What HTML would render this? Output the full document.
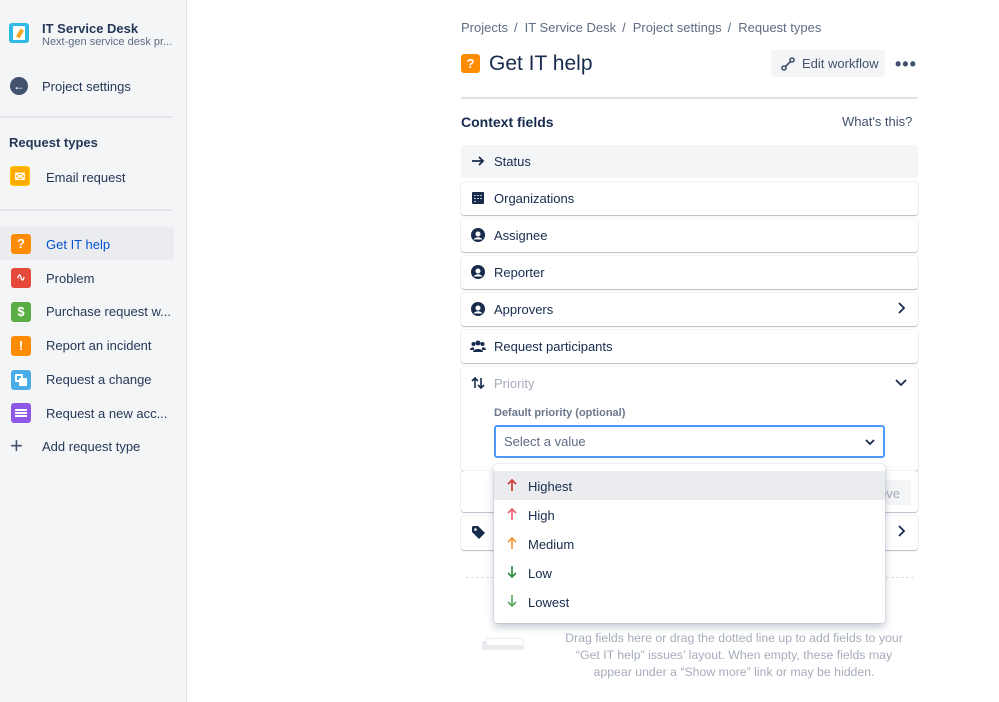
<!DOCTYPE html><html><head><meta charset="utf-8"><style>
*{box-sizing:border-box;margin:0;padding:0}
body{width:999px;height:702px;overflow:hidden;background:#fff;font-family:"Liberation Sans",sans-serif;color:#172b4d;position:relative;font-size:13px}
.sb{position:absolute;left:0;top:0;width:187px;height:702px;background:#f4f5f7;border-right:1px solid #dfe1e6}
.a{position:absolute}
.ico{position:absolute;width:20px;height:20px;border-radius:3px;color:#fff;font-weight:bold;font-size:13px;text-align:center;line-height:20px}
.nav{position:absolute;left:46px;font-size:13px;color:#253858}
.hr{position:absolute;left:0;width:173px;height:2px;background:#e4e6ea}
.row{position:absolute;left:461px;width:457px;height:33px;border-radius:3px;box-shadow:0 1px 1px rgba(9,30,66,.25),0 0 1px rgba(9,30,66,.31);background:#fff}
.row span{position:absolute;left:33px;top:9px;font-size:13px;color:#172b4d}
.row svg{position:absolute;left:9px;top:8px}
.chev{position:absolute;right:10px;top:9px}
.dd{position:absolute;left:494px;top:464px;width:391px;height:159px;background:#fff;border-radius:3px;box-shadow:0 4px 8px rgba(9,30,66,.25),0 0 1px rgba(9,30,66,.31)}
.opt{position:absolute;left:0;width:391px;height:29px}
.opt span{position:absolute;left:34px;top:8px;font-size:13px}
.opt svg{position:absolute;left:12px;top:7px}
.bc span{margin:0 7px 0 6px}
</style></head><body>
<div class="sb">
<div class="a" style="left:9px;top:23px;width:20px;height:20px;background:#2fb9e6;border-radius:3px"><div style="position:absolute;left:4px;top:3px;width:12px;height:14px;background:#fff;border-radius:1px"></div><div style="position:absolute;left:9px;top:6px;width:4px;height:9px;background:#f5a623;transform:rotate(30deg)"></div></div>
<div class="a" style="left:42px;top:21px;font-size:13px;font-weight:bold;color:#253858">IT Service Desk</div>
<div class="a" style="left:42px;top:36px;font-size:11px;color:#5e6c84">Next-gen service desk pr...</div>
<div class="a" style="left:10px;top:77px;width:18px;height:18px;border-radius:50%;background:#42526e;color:#fff;font-size:12px;line-height:18px;text-align:center;font-weight:bold">&#8592;</div>
<div class="a" style="left:42px;top:79px;color:#253858">Project settings</div>
<div class="hr" style="top:116px"></div>
<div class="a" style="left:9px;top:135px;font-weight:bold;color:#253858">Request types</div>
<div class="ico" style="left:10px;top:166px;background:#ffab00;border:1px solid #ffc400">&#9993;</div>
<div class="nav" style="top:170px">Email request</div>
<div class="hr" style="top:209px"></div>
<div class="a" style="left:0;top:227px;width:174px;height:33px;background:#ebecf0;border-radius:0 3px 3px 0"></div>
<div class="ico" style="left:11px;top:234px;background:#ff8b00">?</div>
<div class="nav" style="top:237px;color:#0052cc">Get IT help</div>
<div class="ico" style="left:11px;top:268px;background:#e5493a;font-size:11px">&#8767;</div>
<div class="nav" style="top:271px">Problem</div>
<div class="ico" style="left:11px;top:302px;background:#5aac44">$</div>
<div class="nav" style="top:304px">Purchase request w...</div>
<div class="ico" style="left:11px;top:336px;background:#ff8b00">!</div>
<div class="nav" style="top:338px">Report an incident</div>
<div class="ico" style="left:11px;top:370px;background:#4bade8"><div style="position:absolute;left:4px;top:4px;width:8px;height:8px;border:2px solid #fff;border-radius:1px"></div><div style="position:absolute;left:8px;top:8px;width:8px;height:8px;background:#fff;border-radius:1px"></div></div>
<div class="nav" style="top:372px">Request a change</div>
<div class="ico" style="left:11px;top:403px;background:#8f57e6"><div style="position:absolute;left:4px;top:6px;width:12px;height:2px;background:#fff;box-shadow:0 3px 0 #fff,0 6px 0 #fff"></div></div>
<div class="nav" style="top:406px">Request a new acc...</div>
<div class="a" style="left:10px;top:437px;font-size:22px;line-height:18px;color:#42526e">+</div>
<div class="nav" style="left:42px;top:439px">Add request type</div>
</div>

<div class="a bc" style="left:461px;top:20px;color:#5e6c84;font-size:13px;white-space:nowrap">Projects<span>/</span>IT Service Desk<span>/</span>Project settings<span>/</span>Request types</div>
<div class="ico" style="left:461px;top:54px;background:#ff8b00;width:19px;height:19px;line-height:19px">?</div>
<div class="a" style="left:489px;top:52px;font-size:21px;color:#172b4d">Get IT help</div>
<div class="a" style="left:771px;top:50px;width:114px;height:27px;background:#f4f5f7;border-radius:3px"><svg class="a" style="left:9px;top:6px" width="16" height="16" viewBox="0 0 16 16" fill="none" stroke="#42526e" stroke-width="1.6"><circle cx="4" cy="12" r="2"/><circle cx="12" cy="4" r="2"/><path d="M5.5 10.5 10.5 5.5"/></svg><span class="a" style="left:31px;top:6px;color:#42526e">Edit workflow</span></div>
<div class="a" style="left:895px;top:54px;font-size:18px;color:#42526e;letter-spacing:1px;font-weight:bold">&#8226;&#8226;&#8226;</div>
<div class="a" style="left:461px;top:97px;width:457px;height:2px;background:#dfe1e6"></div>
<div class="a" style="left:461px;top:114px;font-size:14px;font-weight:bold">Context fields</div>
<div class="a" style="left:842px;top:114px;color:#42526e">What's this?</div>

<div class="row" style="top:145px;background:#f4f5f7;box-shadow:none"><svg width="16" height="16" viewBox="0 0 16 16" fill="none" stroke="#172b4d" stroke-width="1.8"><path d="M2 8h11M9 4l4 4-4 4"/></svg><span>Status</span></div>
<div class="row" style="top:182px"><svg width="16" height="16" viewBox="0 0 16 16"><rect x="2" y="2" width="12" height="12" rx="1" fill="#172b4d"/><path d="M5 5v1M5 8v1M5 11v1M8 5v1M8 8v1M11 5v1M11 8v1" stroke="#fff" stroke-width="1.4"/></svg><span>Organizations</span></div>
<div class="row" style="top:219px"><svg width="16" height="16" viewBox="0 0 16 16"><circle cx="8" cy="8" r="7" fill="#172b4d"/><circle cx="8" cy="7" r="2.5" fill="#fff"/><path d="M3.5 12.5c2-3 7-3 9 0" fill="#fff"/></svg><span>Assignee</span></div>
<div class="row" style="top:256px"><svg width="16" height="16" viewBox="0 0 16 16"><circle cx="8" cy="8" r="7" fill="#172b4d"/><circle cx="8" cy="7" r="2.5" fill="#fff"/><path d="M3.5 12.5c2-3 7-3 9 0" fill="#fff"/></svg><span>Reporter</span></div>
<div class="row" style="top:293px"><svg width="16" height="16" viewBox="0 0 16 16"><circle cx="8" cy="8" r="7" fill="#172b4d"/><circle cx="8" cy="7" r="2.5" fill="#fff"/><path d="M3.5 12.5c2-3 7-3 9 0" fill="#fff"/></svg><span>Approvers</span><svg class="chev" style="left:auto" width="14" height="14" viewBox="0 0 14 14" fill="none" stroke="#172b4d" stroke-width="1.8"><path d="M5 2l5 5-5 5"/></svg></div>
<div class="row" style="top:330px"><svg width="16" height="16" viewBox="0 0 16 16" fill="#172b4d"><circle cx="8" cy="5" r="2.5"/><circle cx="3.5" cy="6" r="2"/><circle cx="12.5" cy="6" r="2"/><path d="M3 14c0-4 10-4 10 0zM0 12c0-3 4-3 4-2v2zM16 12c0-3-4-3-4-2v2z"/></svg><span>Request participants</span></div>
<div class="row" style="top:367px;height:104px"><svg width="16" height="16" viewBox="0 0 16 16" fill="none" stroke="#172b4d" stroke-width="1.6"><path d="M5 13V3M2 6l3-3 3 3M11 3v10M8 10l3 3 3-3"/></svg><span style="color:#a5adba">Priority</span><svg class="chev" style="left:auto" width="14" height="14" viewBox="0 0 14 14" fill="none" stroke="#172b4d" stroke-width="1.8"><path d="M2 5l5 5 5-5"/></svg>
<div class="a" style="left:33px;top:40px;font-size:11px;font-weight:bold;color:#6b778c">Default priority (optional)</div>
<div class="a" style="left:33px;top:58px;width:391px;height:33px;border:2px solid #4c9aff;border-radius:3px"><span style="left:8px;top:7px;color:#5e6c84">Select a value</span><svg class="a" style="left:auto;right:6px;top:8px" width="14" height="14" viewBox="0 0 14 14" fill="none" stroke="#172b4d" stroke-width="1.8"><path d="M3 5l4 4 4-4"/></svg></div>
</div>
<div class="row" style="top:471px;height:41px"><div class="a" style="left:400px;top:9px;width:50px;height:25px;background:#f4f5f7;border-radius:3px;color:#a5adba;padding:6px 0 0 18px">ove</div></div>
<div class="row" style="top:516px;height:34px"><svg width="16" height="16" viewBox="0 0 16 16"><path d="M2 3v5l7 7 6-6-7-7H3z" fill="#172b4d"/><circle cx="5.5" cy="5.5" r="1.3" fill="#fff"/></svg><svg class="chev" style="left:auto" width="14" height="14" viewBox="0 0 14 14" fill="none" stroke="#172b4d" stroke-width="1.8"><path d="M5 2l5 5-5 5"/></svg></div>
<div class="a" style="left:466px;top:577px;width:448px;border-top:1px dashed #dfe1e6"></div>
<div class="a" style="left:482px;top:641px;width:42px;height:9px;background:#ebecf0;border-radius:2px"></div>
<div class="a" style="left:486px;top:638px;width:38px;height:8px;background:#fff;border:1px solid #ebecf0;border-radius:2px"></div>
<div class="a" style="left:556px;top:630px;width:356px;text-align:center;color:#a5adba;font-size:12.3px;line-height:17px">Drag fields here or drag the dotted line up to add fields to your “Get IT help” issues’ layout. When empty, these fields may appear under a “Show more” link or may be hidden.</div>

<div class="dd">
<div class="opt" style="top:7px;background:#ebecf0"><svg width="12" height="14" viewBox="0 0 12 14" fill="none" stroke="#d04437" stroke-width="1.8"><path d="M6 13V2M2 6l4-4 4 4"/></svg><span>Highest</span></div>
<div class="opt" style="top:36px"><svg width="12" height="14" viewBox="0 0 12 14" fill="none" stroke="#f15c75" stroke-width="1.6"><path d="M6 13V2M2 6l4-4 4 4"/></svg><span>High</span></div>
<div class="opt" style="top:65px"><svg width="12" height="14" viewBox="0 0 12 14" fill="none" stroke="#f79232" stroke-width="1.6"><path d="M6 13V2M2 6l4-4 4 4"/></svg><span>Medium</span></div>
<div class="opt" style="top:94px"><svg width="12" height="14" viewBox="0 0 12 14" fill="none" stroke="#2a8735" stroke-width="1.6"><path d="M6 1v11M2 8l4 4 4-4"/></svg><span>Low</span></div>
<div class="opt" style="top:123px"><svg width="12" height="14" viewBox="0 0 12 14" fill="none" stroke="#57a55a" stroke-width="1.6"><path d="M6 1v11M2 8l4 4 4-4"/></svg><span>Lowest</span></div>
</div>
</body></html>
